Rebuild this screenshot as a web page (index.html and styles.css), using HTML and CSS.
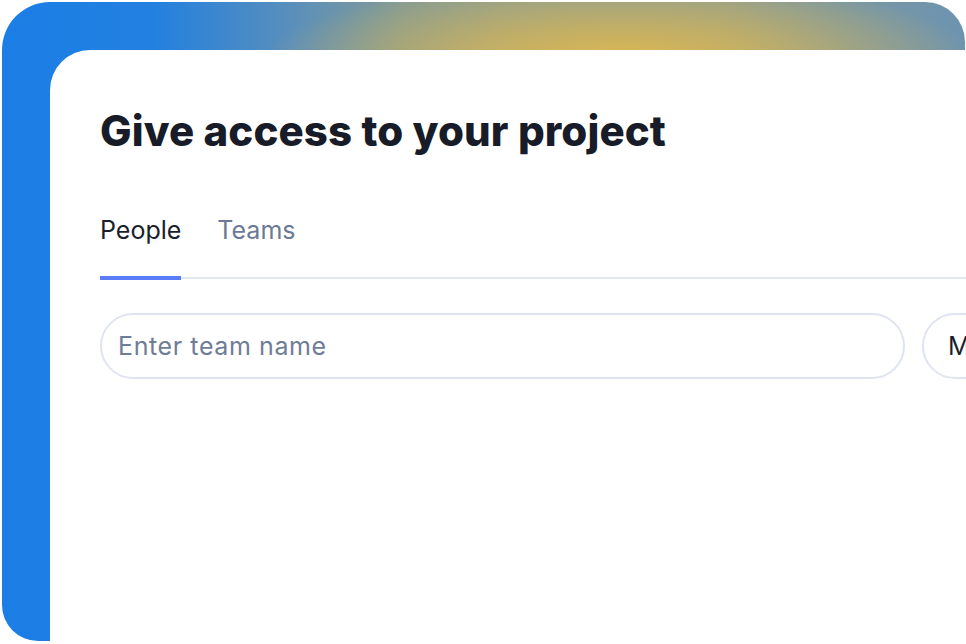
FILE: index.html
```html
<!DOCTYPE html>
<html lang="en">
<head>
<meta charset="utf-8">
<title>Give access to your project</title>
<link rel="stylesheet" href="styles.css">
</head>
<body>
<div class="frame">
  <div class="card">
    <h1 class="title">Give access to your project</h1>
    <div class="tabs">
      <div class="tab tab-active">People</div>
      <div class="tab">Teams</div>
    </div>
    <div class="row">
      <div class="field"><span class="placeholder">Enter team name</span></div>
      <div class="select"><span class="select-text">Member</span></div>
    </div>
  </div>
</div>
</body>
</html>
```
FILE: styles.css
```css
html, body {
  margin: 0;
  padding: 0;
  background: #ffffff;
  overflow: hidden;
  width: 966px;
  height: 644px;
}
body {
  font-family: Inter, "Noto Sans", sans-serif;
}
.frame {
  box-sizing: border-box;
  margin: 2px 1px 0 2px;
  height: 639px;
  border-radius: 48px 40px 0 36px;
  padding: 48px 0 0 48px;
  background:
    radial-gradient(ellipse 360px 80px at 620px 58px, rgba(221,183,80,1) 0%, rgba(221,183,80,0.6) 45%, rgba(221,183,80,0) 100%),
    linear-gradient(90deg, #1b7ee6 0px, #2280e0 150px, #5a8fbb 290px, #839b95 400px, #909f8f 500px, #909f8f 720px, #7b98a2 850px, #6c93b1 966px);
}
.card {
  background: #ffffff;
  border-top-left-radius: 40px;
  height: 620px;
  margin-right: -4px;
  box-sizing: border-box;
  padding: 56px 0 0 50px;
}
.title {
  margin: 0;
  font-size: 42px;
  line-height: 50px;
  font-weight: 800;
  color: #171c28;
  letter-spacing: 0.1px;
}
.tabs {
  display: flex;
  gap: 36px;
  margin-top: 59px;
  border-bottom: 2px solid #e4e7ef;
}
.tab {
  font-size: 25px;
  line-height: 30px;
  padding-bottom: 32px;
  color: #6b7996;
  position: relative;
}
.tab-active {
  color: #1a1f2c;
}
.tab-active::after {
  content: "";
  position: absolute;
  left: 0;
  right: 0;
  bottom: -3px;
  height: 4px;
  background: #5a7cf7;
}
.row {
  display: flex;
  gap: 17px;
  margin-top: 34px;
}
.field, .select {
  box-sizing: border-box;
  height: 66px;
  border: 2px solid #dfe4f0;
  border-radius: 33px;
  display: flex;
  align-items: center;
  flex-shrink: 0;
}
.field {
  width: 805px;
  padding-left: 16px;
}
.select {
  width: 200px;
  padding-left: 24px;
}
.placeholder {
  font-size: 25px;
  letter-spacing: 0.6px;
  color: #6f7c98;
}
.select-text {
  font-size: 25px;
  color: #1a1f2c;
}
```
